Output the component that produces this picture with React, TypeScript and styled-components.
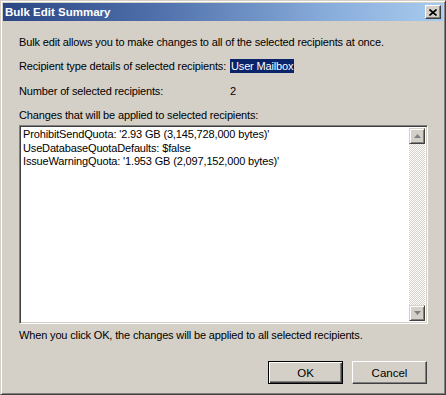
import React from "react";
import styled, { createGlobalStyle } from "styled-components";

const Global = createGlobalStyle`
  html, body { margin: 0; padding: 0; background: #d4d0c8; }
  body { font-family: "Liberation Sans", Arial, sans-serif; }
`;

const Window = styled.div`
  width: 446px;
  height: 395px;
  box-sizing: border-box;
  background: #d4d0c8;
  border-top: 1px solid #d4d0c8;
  border-left: 1px solid #d4d0c8;
  border-right: 1px solid #404040;
  border-bottom: 1px solid #404040;
  box-shadow: inset 1px 1px 0 #ffffff, inset -1px -1px 0 #808080;
  padding: 2px;
  display: flex;
  flex-direction: column;
  font-family: "Liberation Sans", Arial, sans-serif;
  font-size: 11px;
  letter-spacing: -0.15px;
  color: #000;
`;

const TitleBar = styled.div`
  height: 18px;
  flex: none;
  display: flex;
  align-items: center;
  justify-content: space-between;
  padding: 0 2px 0 2px;
  background: linear-gradient(to right, #2a4685 0%, #4f70ab 35%, #8aaedc 75%, #a8cbee 100%);
`;

const Title = styled.span`
  color: #ffffff;
  font-weight: bold;
  font-size: 11.5px;
  letter-spacing: 0;
`;

const CloseBtn = styled.div`
  width: 16px;
  height: 14px;
  box-sizing: border-box;
  background: #d4d0c8;
  border-top: 1px solid #ffffff;
  border-left: 1px solid #ffffff;
  border-right: 1px solid #404040;
  border-bottom: 1px solid #404040;
  box-shadow: inset -1px -1px 0 #808080;
  display: flex;
  align-items: center;
  justify-content: center;
`;

const Content = styled.div`
  flex: 1;
  display: flex;
  flex-direction: column;
  padding: 14px 0 0 16px;
`;

const Line = styled.div<{ $mt?: number }>`
  line-height: 14px;
  height: 14px;
  margin-top: ${(p) => p.$mt ?? 0}px;
  white-space: nowrap;
`;

const Row = styled.div<{ $mt?: number }>`
  display: grid;
  grid-template-columns: 211px auto;
  line-height: 14px;
  height: 14px;
  margin-top: ${(p) => p.$mt ?? 0}px;
  white-space: nowrap;
`;

const Selected = styled.span`
  justify-self: start;
  background: #0a246a;
  color: #ffffff;
  padding: 0 1px;
`;

const TextBox = styled.div`
  margin-top: 3px;
  width: 409px;
  height: 199px;
  box-sizing: border-box;
  background: #ffffff;
  border-top: 1px solid #808080;
  border-left: 1px solid #808080;
  border-right: 1px solid #ffffff;
  border-bottom: 1px solid #ffffff;
  box-shadow: inset 1px 1px 0 #404040, inset -1px -1px 0 #d4d0c8;
  padding: 2px;
  display: flex;
`;

const TextLines = styled.div`
  flex: 1;
  padding: 0 0 0 1px;
  line-height: 13.5px;
  white-space: nowrap;
  overflow: hidden;
`;

const ScrollBar = styled.div`
  width: 16px;
  display: flex;
  flex-direction: column;
  justify-content: space-between;
  background: repeating-conic-gradient(#ffffff 0 25%, #d4d0c8 0 50%) 0 0 / 2px 2px;
`;

const ScrollBtn = styled.div`
  width: 16px;
  height: 16px;
  box-sizing: border-box;
  background: #d4d0c8;
  border-top: 1px solid #d4d0c8;
  border-left: 1px solid #d4d0c8;
  border-right: 1px solid #404040;
  border-bottom: 1px solid #404040;
  box-shadow: inset 1px 1px 0 #ffffff, inset -1px -1px 0 #808080;
  display: flex;
  align-items: center;
  justify-content: center;
`;

const Footer = styled.div`
  margin-top: 4px;
  line-height: 14px;
  white-space: nowrap;
`;

const ButtonRow = styled.div`
  margin-top: 19px;
  width: 408px;
  display: flex;
  justify-content: flex-end;
  gap: 9px;
`;

const Button = styled.div<{ $default?: boolean }>`
  width: 75px;
  height: 23px;
  box-sizing: border-box;
  background: #d4d0c8;
  display: flex;
  align-items: center;
  justify-content: center;
  font-size: 11.5px;
  letter-spacing: 0;
  border: 1px solid;
  border-color: ${(p) => (p.$default ? "#000000" : "#ffffff #404040 #404040 #ffffff")};
  box-shadow: ${(p) =>
    p.$default
      ? "inset 1px 1px 0 #ffffff, inset -1px -1px 0 #404040, inset -2px -2px 0 #808080"
      : "inset -1px -1px 0 #808080"};
`;

const Arrow = ({ up }: { up?: boolean }) => (
  <svg width="7" height="4" viewBox="0 0 7 4">
    <path d={up ? "M3.5 0 L7 4 L0 4 Z" : "M0 0 L7 0 L3.5 4 Z"} fill="#808080" />
  </svg>
);

const XIcon = () => (
  <svg width="8" height="7" viewBox="0 0 8 7">
    <path d="M0.5 0.5 L7.5 6.5 M7.5 0.5 L0.5 6.5" stroke="#000" strokeWidth="1.6" />
  </svg>
);

export default function App() {
  return (
    <>
      <Global />
      <Window>
        <TitleBar>
          <Title>Bulk Edit Summary</Title>
          <CloseBtn>
            <XIcon />
          </CloseBtn>
        </TitleBar>
        <Content>
          <Line>Bulk edit allows you to make changes to all of the selected recipients at once.</Line>
          <Row $mt={10}>
            <span>Recipient type details of selected recipients:</span>
            <Selected>User Mailbox</Selected>
          </Row>
          <Row $mt={11}>
            <span>Number of selected recipients:</span>
            <span>2</span>
          </Row>
          <Line $mt={10}>Changes that will be applied to selected recipients:</Line>
          <TextBox>
            <TextLines>
              <div>ProhibitSendQuota: '2.93 GB (3,145,728,000 bytes)'</div>
              <div>UseDatabaseQuotaDefaults: $false</div>
              <div>IssueWarningQuota: '1.953 GB (2,097,152,000 bytes)'</div>
            </TextLines>
            <ScrollBar>
              <ScrollBtn>
                <Arrow up />
              </ScrollBtn>
              <ScrollBtn>
                <Arrow />
              </ScrollBtn>
            </ScrollBar>
          </TextBox>
          <Footer>When you click OK, the changes will be applied to all selected recipients.</Footer>
          <ButtonRow>
            <Button $default>OK</Button>
            <Button>Cancel</Button>
          </ButtonRow>
        </Content>
      </Window>
    </>
  );
}
